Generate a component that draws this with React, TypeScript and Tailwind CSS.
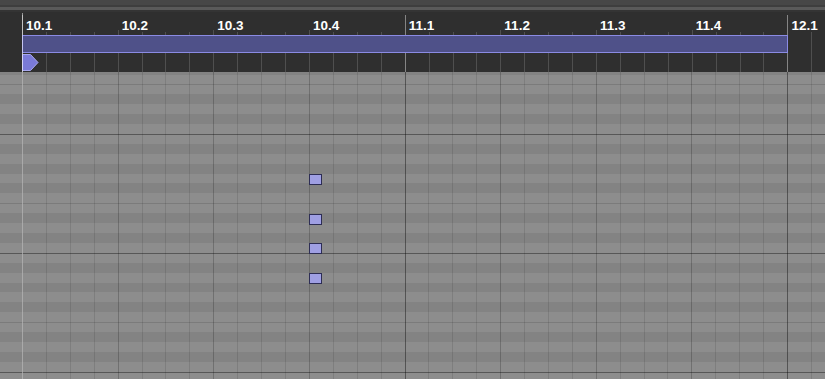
import clsx from "clsx";

const beats = ["10.1", "10.2", "10.3", "10.4", "11.1", "11.2", "11.3", "11.4", "12.1"];
const keys = ["F#", "F", "E", "D#", "D", "C#", "C", "B", "A#", "A", "G#", "G"];
const rows = Array.from({ length: 33 }, (_, i) => keys[i % 12]);
// note tops, relative to the grid
const notes = [102, 142, 171, 201];

function Ruler() {
  return (
    <div className="relative h-[60px] shrink-0 flex pt-[3px] pl-[22px] bg-[#2f2f2f]">
      {beats.map((b, i) => (
        <div key={b} className="relative w-[95.68px] shrink-0 flex flex-col">
          {i % 4 === 0 && (
            <div className="absolute left-0 top-0 bottom-0 w-px bg-[#858585]" />
          )}
          <div className="h-[15px] pt-[4px] pl-[4px] text-[13.5px] leading-[14px] font-bold text-white">
            {b}
          </div>
          <div className="flex h-[42px]">
            {[0, 1, 2, 3].map((j) => (
              <div key={j} className="w-[23.92px] shrink-0 flex items-end">
                <div
                  className={clsx(
                    "w-px bg-[#4f4f4f]",
                    j === 0 ? "h-[42px]" : "h-[40px]"
                  )}
                />
              </div>
            ))}
          </div>
        </div>
      ))}

      {/* Clip */}
      <div className="absolute left-[22px] top-[23px] w-[766px] h-[18px] bg-[#4f5189] border border-[#8b8be4]" />

      {/* Loop start marker */}
      <svg
        className="absolute left-[22px] top-[42px]"
        width="17"
        height="17"
        viewBox="0 0 17 17"
      >
        <polygon
          points="0.5,0.5 8.5,0.5 16,8.5 8.5,16.5 0.5,16.5"
          fill="#7a7ad8"
          stroke="#a9a9f0"
          strokeWidth="1"
        />
      </svg>
    </div>
  );
}

function NoteGrid() {
  return (
    <div className="relative flex-1 overflow-hidden">
      {/* Key rows */}
      <div className="flex flex-col mt-[-7.42px]">
        {rows.map((k, i) => (
          <div
            key={i}
            className={clsx(
              "h-[9.917px] shrink-0",
              k.includes("#") ? "bg-[#838383]" : "bg-[#8d8d8d]",
              k === "B" && "border-t border-[#575757]",
              k === "E" && "border-t border-[#7b7b7b]"
            )}
          />
        ))}
      </div>

      {/* Sixteenth lines */}
      <div className="absolute inset-0 flex pl-[22px]">
        {Array.from({ length: 34 }).map((_, i) => (
          <div
            key={i}
            className={clsx(
              "w-[23.92px] shrink-0 border-l",
              i % 16 === 0
                ? "border-black/40"
                : i % 4 === 0
                ? "border-black/20"
                : "border-black/10"
            )}
          />
        ))}
      </div>

      {/* Notes */}
      {notes.map((t) => (
        <div
          key={t}
          className="absolute left-[309px] w-[13px] h-[11px] bg-[#9f9fe3] border border-[#2d2d55]"
          style={{ top: t }}
        />
      ))}
    </div>
  );
}

export default function App() {
  return (
    <div className="relative w-[825px] h-[379px] overflow-hidden flex flex-col bg-[#2f2f2f] font-['Liberation_Sans',Arial,sans-serif]">
      <div className="h-[5px] shrink-0 bg-[#474747]" />
      <div className="h-[2px] shrink-0 bg-[#3e3e3e]" />
      <div className="h-[3px] shrink-0 bg-[#5a5a5a]" />
      <div className="h-[2px] shrink-0 bg-[#343434]" />
      <Ruler />
      <NoteGrid />

      {/* Playhead / clip start line */}
      <div className="absolute left-[22px] top-[13px] bottom-0 w-px bg-white/50" />
    </div>
  );
}
